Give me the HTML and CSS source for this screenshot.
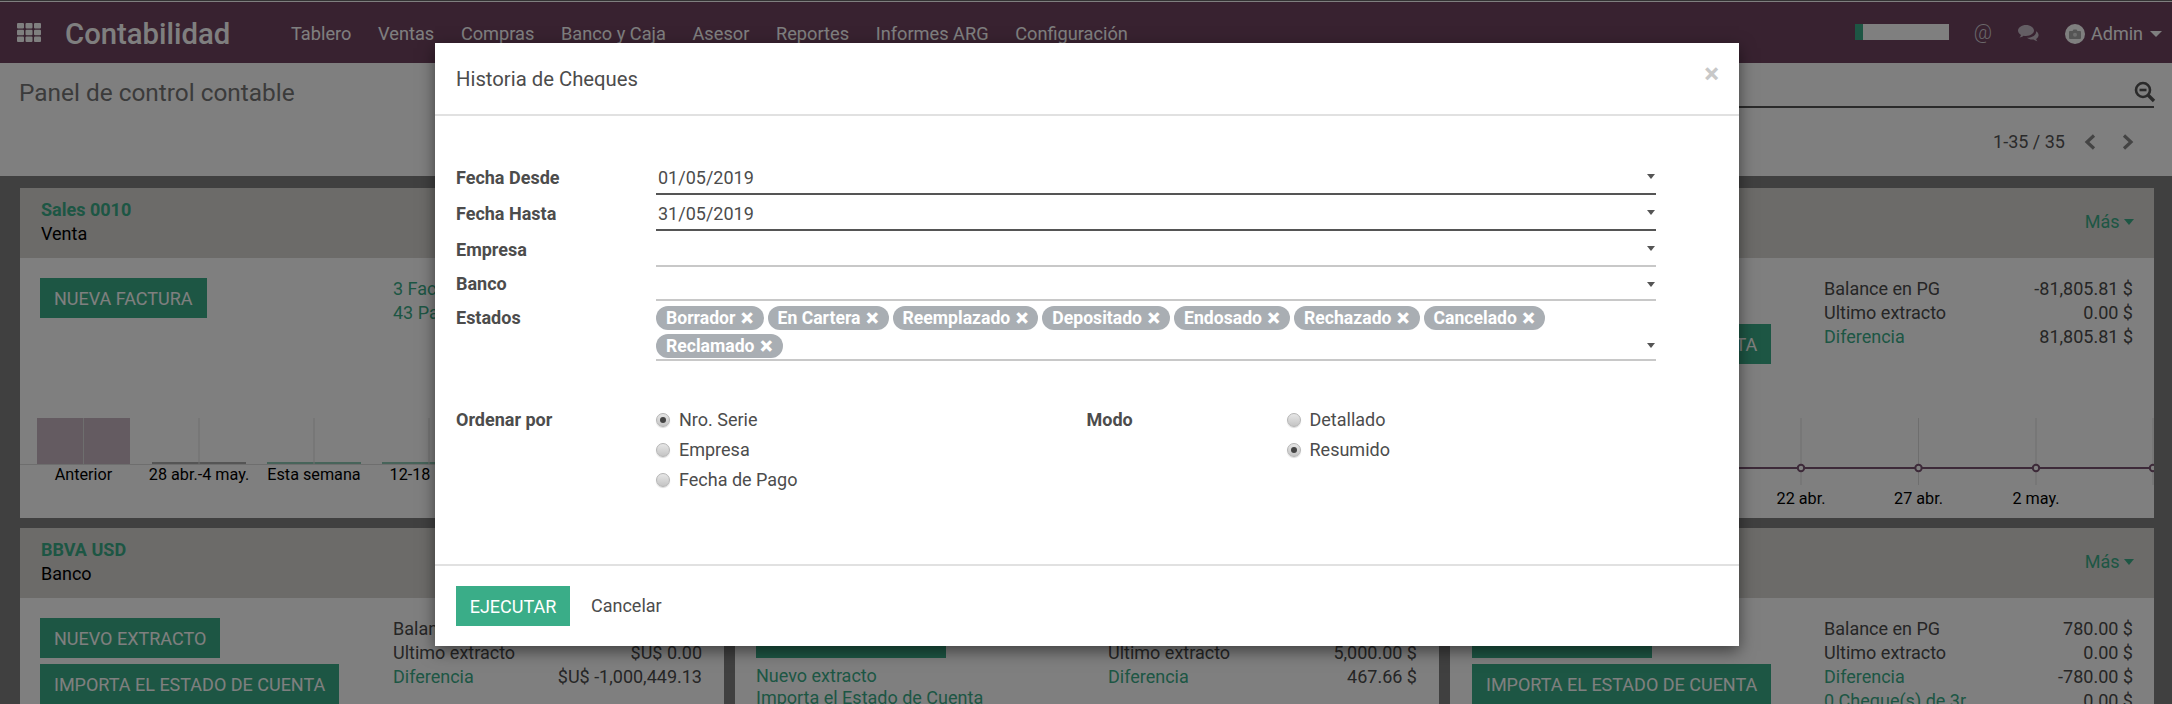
FILE: index.html
```html
<!DOCTYPE html>
<html>

<head>
    <meta charset="UTF-8" />
    <title>Panel de control contable</title>
    <link rel="stylesheet" href="styles.css">
</head>

<body>
    <div class="topline"></div>
    <header class="navbar">
        <svg class="apps-icon" width="24" height="19" viewBox="0 0 24 19">
            <rect x="0" y="0" width="7" height="5.5" rx="1" />
            <rect x="8.5" y="0" width="7" height="5.5" rx="1" />
            <rect x="17" y="0" width="7" height="5.5" rx="1" />
            <rect x="0" y="6.8" width="7" height="5.5" rx="1" />
            <rect x="8.5" y="6.8" width="7" height="5.5" rx="1" />
            <rect x="17" y="6.8" width="7" height="5.5" rx="1" />
            <rect x="0" y="13.5" width="7" height="5.5" rx="1" />
            <rect x="8.5" y="13.5" width="7" height="5.5" rx="1" />
            <rect x="17" y="13.5" width="7" height="5.5" rx="1" />
        </svg>
        <span class="brand">Contabilidad</span>
        <nav class="menu">
            <a>Tablero</a>
            <a>Ventas</a>
            <a>Compras</a>
            <a>Banco y Caja</a>
            <a>Asesor</a>
            <a>Reportes</a>
            <a>Informes ARG</a>
            <a>Configuración</a>
        </nav>
        <div class="systray">
            <div class="progress"><div class="progress-fill"></div></div>
            <span class="at">@</span>
            <svg class="chat" width="22" height="18" viewBox="0 0 22 18">
                <path d="M8 0C3.6 0 0 2.5 0 5.6c0 1.800 1.200 3.400 3 4.400-.3 1-.9 1.900-1.600 2.600 1.500-.2 3-.9 4.200-1.800.8.100 1.600.200 2.400.200 4.400 0 8-2.500 8-5.400S12.400 0 8 0z" />
                <path d="M18.200 6.200c.2 3.900-3.900 6.500-9.200 6.600 1.300 1.200 3.100 1.800 5 1.800.5 0 1-.1 1.500-.1 1 .9 2.500 1.500 4 1.800-.7-.7-1.200-1.500-1.400-2.400 1.500-.9 2.500-2.200 2.500-3.700 0-1.600-.9-3-2.400-4z" />
            </svg>
            <span class="avatar">
                <svg width="12" height="10" viewBox="0 0 12 10">
                    <path d="M1 2h2.500l1-1.500h3l1 1.500H11a1 1 0 0 1 1 1v6a1 1 0 0 1-1 1H1a1 1 0 0 1-1-1V3a1 1 0 0 1 1-1z" />
                    <circle cx="6" cy="5.700" r="2" fill="#ddd" />
                </svg>
            </span>
            <span class="user">Admin</span>
            <span class="caret caret-light"></span>
        </div>
    </header>

    <section class="control-panel">
        <div class="cp-top">
            <h1 class="page-title">Panel de control contable</h1>
            <div class="search">
                <svg width="22" height="22" viewBox="0 0 22 22" fill="none" stroke="#555" stroke-width="2.600">
                    <circle cx="9" cy="9" r="7" />
                    <path d="M5.500 9h7" />
                    <path d="M14 14l6 6" stroke-width="3.400" />
                </svg>
            </div>
        </div>
        <div class="pager">
            <span class="pager-text">1-35 / 35</span>
            <svg width="12" height="16" viewBox="0 0 12 16" fill="none" stroke="#888" stroke-width="3.200">
                <path d="M10 1.500L3 8l7 6.500" />
            </svg>
            <svg width="12" height="16" viewBox="0 0 12 16" fill="none" stroke="#888" stroke-width="3.200">
                <path d="M2 1.500L9 8l-7 6.500" />
            </svg>
        </div>
    </section>

    <main class="dashboard">
        <!-- fila 1 -->
        <article class="card">
            <div class="card-head">
                <div>
                    <div class="card-name">Sales 0010</div>
                    <div>Venta</div>
                </div>
            </div>
            <div class="card-body">
                <div class="actions">
                    <button class="btn">NUEVA FACTURA</button>
                </div>
                <div class="info">
                    <div class="row"><a class="link">3 Facturas a validar</a></div>
                    <div class="row"><a class="link">43 Pagos a realizar</a></div>
                </div>
            </div>
            <svg class="chart" width="704" height="100">
                <rect x="17" y="0" width="93" height="46" fill="#c9b7c3" />
                <rect x="132" y="44" width="94" height="2" fill="#aaa" />
                <rect x="247" y="44" width="94" height="2" fill="#8fc9b5" />
                <rect x="362" y="44" width="94" height="2" fill="#8fc9b5" />
                <path d="M63.500 0v46M179 0v46M294 0v46M409 0v46" stroke="#ddd" />
                <path d="M0 46.500h704" stroke="#ddd" />
                <text x="63.500" y="61.500">Anterior</text>
                <text x="179" y="61.500">28 abr.-4 may.</text>
                <text x="294" y="61.500">Esta semana</text>
                <text x="409" y="61.500">12-18 may.</text>
            </svg>
        </article>

        <article class="card">
            <div class="card-head"></div>
        </article>

        <article class="card card-right">
            <div class="card-head">
                <div></div>
                <a class="more">Más <span class="caret caret-green"></span></a>
            </div>
            <div class="card-body">
                <div class="actions">
                    <button class="btn">NUEVO EXTRACTO</button>
                    <button class="btn">IMPORTA EL ESTADO DE CUENTA</button>
                </div>
                <div class="info">
                    <div class="row"><span>Balance en PG</span><span>-81,805.81 $</span></div>
                    <div class="row"><span>Ultimo extracto</span><span>0.00 $</span></div>
                    <div class="row"><a class="link">Diferencia</a><span>81,805.81 $</span></div>
                </div>
            </div>
            <svg class="chart chart-line" width="704" height="100">
                <path d="M351 0v67M468.500 0v67M586 0v67M703 0v67" stroke="#ddd" />
                <path d="M0 50h704" stroke="#7a5573" stroke-width="2" />
                <circle cx="351" cy="50" r="3.200" />
                <circle cx="468.500" cy="50" r="3.200" />
                <circle cx="586" cy="50" r="3.200" />
                <circle cx="703" cy="50" r="3.200" />
                <text x="351" y="86">22 abr.</text>
                <text x="468.500" y="86">27 abr.</text>
                <text x="586" y="86">2 may.</text>
            </svg>
        </article>

        <!-- fila 2 -->
        <article class="card">
            <div class="card-head">
                <div>
                    <div class="card-name">BBVA USD</div>
                    <div>Banco</div>
                </div>
            </div>
            <div class="card-body">
                <div class="actions">
                    <button class="btn">NUEVO EXTRACTO</button>
                    <button class="btn">IMPORTA EL ESTADO DE CUENTA</button>
                </div>
                <div class="info">
                    <div class="row"><span>Balance en PG</span><span>$U$ -1,000,449.13</span></div>
                    <div class="row"><span>Ultimo extracto</span><span>$U$ 0.00</span></div>
                    <div class="row"><a class="link">Diferencia</a><span>$U$ -1,000,449.13</span></div>
                </div>
            </div>
        </article>

        <article class="card">
            <div class="card-head"></div>
            <div class="card-body">
                <div class="actions">
                    <button class="btn btn-mid">NUEVO EXTRACTO</button>
                    <div class="action-link"><a class="link">Nuevo extracto</a></div>
                    <div class="action-link"><a class="link">Importa el Estado de Cuenta</a></div>
                </div>
                <div class="info">
                    <div class="row"><span>Balance en PG</span><span>5,467.66 $</span></div>
                    <div class="row"><span>Ultimo extracto</span><span>5,000.00 $</span></div>
                    <div class="row"><a class="link">Diferencia</a><span>467.66 $</span></div>
                </div>
            </div>
        </article>

        <article class="card card-right">
            <div class="card-head">
                <div></div>
                <a class="more">Más <span class="caret caret-green"></span></a>
            </div>
            <div class="card-body">
                <div class="actions">
                    <button class="btn">NUEVO EXTRACTO</button>
                    <button class="btn">IMPORTA EL ESTADO DE CUENTA</button>
                </div>
                <div class="info">
                    <div class="row"><span>Balance en PG</span><span>780.00 $</span></div>
                    <div class="row"><span>Ultimo extracto</span><span>0.00 $</span></div>
                    <div class="row"><a class="link">Diferencia</a><span>-780.00 $</span></div>
                    <div class="row"><a class="link">0 Cheque(s) de 3r</a><span>0.00 $</span></div>
                </div>
            </div>
        </article>
    </main>

    <div class="backdrop"></div>

    <div class="modal">
        <div class="modal-head">
            <h4 class="modal-title">Historia de Cheques</h4>
            <span class="close">×</span>
        </div>
        <div class="modal-body">
            <div class="form-row">
                <label>Fecha Desde</label>
                <div class="field field-active"><span>01/05/2019</span><i class="field-caret"></i></div>
            </div>
            <div class="form-row">
                <label>Fecha Hasta</label>
                <div class="field field-active"><span>31/05/2019</span><i class="field-caret"></i></div>
            </div>
            <div class="form-row">
                <label>Empresa</label>
                <div class="field"><span></span><i class="field-caret"></i></div>
            </div>
            <div class="form-row form-row-short">
                <label>Banco</label>
                <div class="field"><span></span><i class="field-caret"></i></div>
            </div>
            <div class="form-row form-row-tags">
                <label>Estados</label>
                <div class="field field-tags">
                    <div class="tags">
                        <span class="tag">Borrador <b>×</b></span>
                        <span class="tag">En Cartera <b>×</b></span>
                        <span class="tag">Reemplazado <b>×</b></span>
                        <span class="tag">Depositado <b>×</b></span>
                        <span class="tag">Endosado <b>×</b></span>
                        <span class="tag">Rechazado <b>×</b></span>
                        <span class="tag">Cancelado <b>×</b></span>
                        <span class="tag">Reclamado <b>×</b></span>
                    </div>
                    <i class="field-caret"></i>
                </div>
            </div>
            <div class="options">
                <div class="option-group">
                    <label>Ordenar por</label>
                    <div class="radios">
                        <div class="radio-line"><span class="radio radio-on"></span>Nro. Serie</div>
                        <div class="radio-line"><span class="radio"></span>Empresa</div>
                        <div class="radio-line"><span class="radio"></span>Fecha de Pago</div>
                    </div>
                </div>
                <div class="option-group">
                    <label>Modo</label>
                    <div class="radios">
                        <div class="radio-line"><span class="radio"></span>Detallado</div>
                        <div class="radio-line"><span class="radio radio-on"></span>Resumido</div>
                    </div>
                </div>
            </div>
        </div>
        <div class="modal-foot">
            <button class="btn btn-run">EJECUTAR</button>
            <a class="cancel">Cancelar</a>
        </div>
    </div>
</body>

</html>
```

FILE: styles.css
```css
*{
    margin: 0;
    padding: 0;
    box-sizing: border-box;
}

html, body{
    height: 704px;
    overflow: hidden;
}

body{
    position: relative;
    font-family: Roboto, "Liberation Sans", sans-serif;
    font-size: 18px;
    line-height: 24px;
    color: #4c4c4c;
    background-color: #fff;
}

/* linea clara sobre la barra */
.topline{
    height: 2px;
    border-top: 1px solid #666;
    background-color: #fff;
}

/* barra superior */
.navbar{
    height: 61px;
    display: flex;
    align-items: center;
    padding: 2px 10px 0 17px;
    background-color: #704460;
    color: #fff;
}

.apps-icon{
    fill: #fff;
    margin-top: -3px;
}

.brand{
    margin-left: 24px;
    font-size: 29.300px;
    font-weight: 500;
    width: 226px;
}

.menu{
    display: flex;
    gap: 26.700px;
    font-size: 18.200px;
}

.systray{
    margin-left: auto;
    display: flex;
    align-items: center;
}

.progress{
    width: 94px;
    height: 16px;
    background-color: #fff;
    margin-top: -4px;
}

.progress-fill{
    width: 8px;
    height: 16px;
    background-color: #3aad88;
}

.at{
    margin-left: 25px;
    color: #d6d0d6;
    margin-top: -4px;
    font-size: 20px;
    font-weight: 300;
}

.chat{
    margin-left: 26px;
    fill: #c8bcc8;
}

.avatar{
    margin-left: 25px;
    width: 20px;
    height: 20px;
    border-radius: 50%;
    background-color: #fff;
    display: flex;
    align-items: center;
    justify-content: center;
}

.avatar svg{
    fill: #aaa;
}

.user{
    margin-left: 6px;
}

.caret{
    display: inline-block;
    width: 0;
    height: 0;
    border-left: 6px solid transparent;
    border-right: 6px solid transparent;
    border-top: 6px solid #fff;
}

.caret-light{
    margin-left: 7px;
}

.caret-green{
    border-left-width: 5px;
    border-right-width: 5px;
    border-top-color: #3aad88;
    vertical-align: 3px;
}

/* panel de control */
.control-panel{
    height: 113px;
    background-color: #fff;
    padding: 0 18px 0 20px;
}

.cp-top{
    height: 45px;
    display: flex;
    align-items: center;
    justify-content: space-between;
}

.page-title{
    font-size: 24.400px;
    font-weight: 400;
    color: #777;
    margin-top: 14px;
    margin-left: -1px;
}

.search{
    width: 1068px;
    height: 45px;
    border-bottom: 2px solid #555;
    display: flex;
    justify-content: flex-end;
    align-items: flex-end;
    padding-bottom: 3px;
}

.search svg{
    margin-right: -2px;
}

.pager{
    margin-top: 22px;
    display: flex;
    justify-content: flex-end;
    align-items: center;
    gap: 26px;
    padding-right: 20px;
    color: #555;
}

.pager-text{
    margin-right: -7px;
}

/* tablero */
.dashboard{
    height: 528px;
    padding: 12px 18px 0 20px;
    background-color: #808080;
    display: grid;
    grid-template-columns: repeat(3, 704px);
    grid-template-rows: 330px 176px;
    column-gap: 11px;
    row-gap: 10px;
    overflow: hidden;
}

.card{
    background-color: #fff;
    display: flex;
    flex-direction: column;
    overflow: hidden;
}

.card-head{
    height: 70px;
    flex: none;
    background-color: #d8d6d2;
    padding: 10px 21px 0;
    display: flex;
    justify-content: space-between;
    color: #000;
}

.card-name{
    font-weight: 700;
    color: #3aad88;
}

.more{
    color: #3aad88;
    margin-top: 12px;
}

.card-body{
    display: flex;
    padding: 20px 21px 0 20px;
}

.card-right .card-head{
    padding-right: 20px;
}

.card-right .card-body{
    padding-left: 22px;
}

.actions{
    width: 353px;
    flex: none;
    display: flex;
    flex-direction: column;
    align-items: flex-start;
    gap: 6px;
}

.card-right .actions{
    width: 352px;
}

.btn{
    height: 40px;
    padding: 0 14px;
    border: 0;
    background-color: #3aad88;
    color: #fff;
    font-family: inherit;
    font-size: 18px;
}

.btn-mid{
    width: 190px;
    margin-left: 1px;
}

.action-link{
    margin-left: 1px;
    margin-bottom: -8px;
}

.info{
    width: 309px;
    flex: none;
    margin-top: -1px;
}

.row{
    display: flex;
    justify-content: space-between;
    white-space: nowrap;
}

.link{
    color: #3aad88;
}

.chart{
    display: block;
    margin-top: auto;
    flex: none;
}

.chart text{
    font-family: Roboto, "Liberation Sans", sans-serif;
    font-size: 16.200px;
    text-anchor: middle;
    fill: #000;
}

.chart-line circle{
    fill: #fff;
    stroke: #7a5573;
    stroke-width: 2;
}

/* fondo oscuro del dialogo */
.backdrop{
    position: absolute;
    top: 0;
    left: 0;
    width: 100%;
    height: 100%;
    background-color: #000;
    opacity: 0.5;
}

/* dialogo */
.modal{
    position: absolute;
    left: 435px;
    top: 43px;
    width: 1304px;
    height: 603px;
    background-color: #fff;
    box-shadow: 0 5px 15px rgba(0, 0, 0, 0.5);
    display: flex;
    flex-direction: column;
}

.modal-head{
    height: 73px;
    flex: none;
    border-bottom: 2px solid #e1e1e1;
    padding: 22px 21px 0;
    display: flex;
    justify-content: space-between;
}

.modal-title{
    font-size: 20.300px;
    font-weight: 400;
    line-height: 28px;
}

.close{
    font-size: 28px;
    font-weight: 700;
    line-height: 20px;
    color: #c8c8c8;
    margin-top: -1px;
    margin-right: -1px;
}

.modal-body{
    flex: 1;
    padding: 45px 21px 0;
}

.form-row{
    display: flex;
    margin-bottom: 2px;
}

.form-row label, .option-group label{
    width: 200px;
    flex: none;
    font-weight: 700;
}

.form-row label{
    padding-top: 5px;
}

.field{
    width: 1000px;
    height: 34px;
    border-bottom: 2px solid #c8c8c8;
    display: flex;
    justify-content: space-between;
    padding: 5px 0 0 2px;
    position: relative;
}

.field-active{
    border-bottom-color: #555;
}

.form-row-short .field{
    height: 32px;
}

.form-row-short label{
    padding-top: 3px;
}

.form-row-tags{
    margin-top: 3px;
}

.form-row-tags label{
    padding-top: 2px;
}

.field-tags{
    height: 57px;
    padding: 0;
}

.field-caret{
    position: absolute;
    right: 1px;
    top: 13px;
    width: 0;
    height: 0;
    border-left: 4px solid transparent;
    border-right: 4px solid transparent;
    border-top: 5px solid #555;
}

.field-tags .field-caret{
    top: 39px;
}

.tags{
    display: flex;
    flex-wrap: wrap;
    align-content: flex-start;
    row-gap: 4px;
    column-gap: 4px;
    padding-top: 2px;
}

.tag{
    height: 24px;
    padding: 0 10px;
    border-radius: 12px;
    background-color: #a9aeb3;
    color: #fff;
    font-weight: 700;
    font-size: 17.600px;
    line-height: 24px;
    white-space: nowrap;
}

.tag b{
    font-size: 24px;
    line-height: 0;
    vertical-align: -2px;
    margin-left: 1px;
}

.options{
    display: grid;
    grid-template-columns: 630.500px 1fr;
    margin-top: 47px;
}

.option-group{
    display: flex;
}

.radios{
    display: flex;
    flex-direction: column;
    gap: 6px;
}

.radio-line{
    display: flex;
    align-items: center;
    height: 24px;
}

.radio{
    width: 14px;
    height: 14px;
    border-radius: 50%;
    border: 1px solid #b5b5b5;
    background: linear-gradient(#e6e6e6, #c4c4c4);
    box-shadow: 0 1px 1px rgba(0, 0, 0, 0.15);
    margin-right: 9px;
    display: flex;
    align-items: center;
    justify-content: center;
}

.radio-on:after{
    content: "";
    width: 6px;
    height: 6px;
    border-radius: 50%;
    background-color: #444;
}

.modal-foot{
    height: 82px;
    flex: none;
    border-top: 2px solid #e1e1e1;
    padding: 20px 21px 0;
    display: flex;
    align-items: flex-start;
    gap: 21px;
}

.btn-run{
    width: 114px;
    padding: 0;
}

.cancel{
    line-height: 40px;
}
```
